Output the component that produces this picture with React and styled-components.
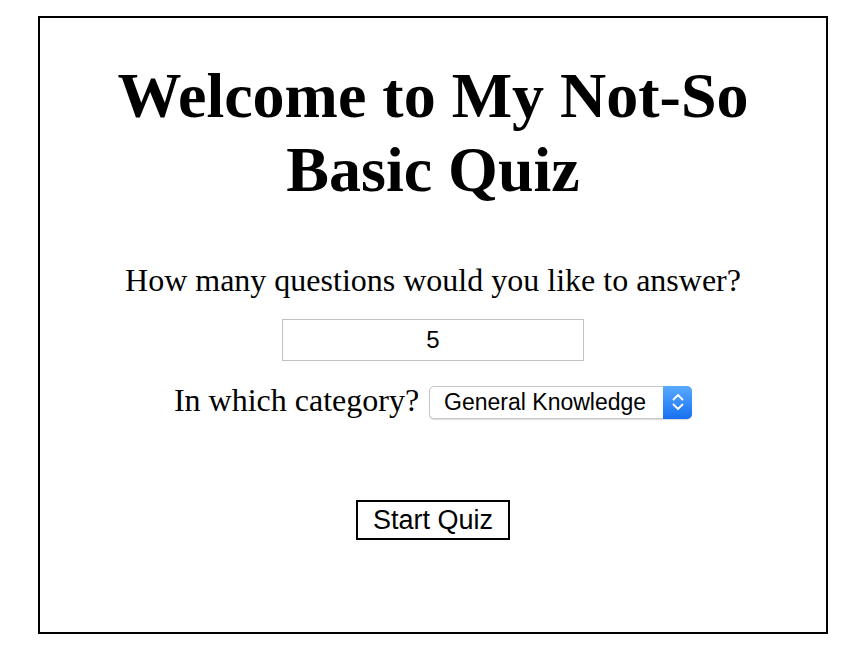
import React, { useState } from 'react';
import styled, { createGlobalStyle } from 'styled-components';

const Global = createGlobalStyle`
  html, body {
    margin: 0;
    padding: 0;
    background: #fff;
  }
  body {
    font-family: "Liberation Serif", "Times New Roman", serif;
    color: #000;
  }
`;

const categories = [
  'General Knowledge',
  'Books',
  'Film',
  'Music',
  'Television',
  'Video Games',
  'Science & Nature',
  'Computers',
  'Mathematics',
  'Sports',
  'Geography',
  'History',
];

const App = () => {
  const [count, setCount] = useState(5);
  const [category, setCategory] = useState(categories[0]);

  return (
    <>
      <Global />
      <Page>
        <Card>
          <Title>Welcome to My Not-So Basic Quiz</Title>
          <Prompt>How many questions would you like to answer?</Prompt>
          <NumberInput
            type="number"
            value={count}
            onChange={(e) => setCount(e.target.value)}
          />
          <Row>
            <Label>In which category?</Label>
            <SelectWrap>
              <Select value={category} onChange={(e) => setCategory(e.target.value)}>
                {categories.map((c) => (
                  <option key={c}>{c}</option>
                ))}
              </Select>
              <Stepper>
                <svg width="12" height="20" viewBox="0 0 12 20">
                  <path d="M1.5 7.5 L6 3 L10.5 7.5" fill="none" stroke="#fff" strokeWidth="1.8" strokeLinecap="round" strokeLinejoin="round" />
                  <path d="M1.5 12.5 L6 17 L10.5 12.5" fill="none" stroke="#fff" strokeWidth="1.8" strokeLinecap="round" strokeLinejoin="round" />
                </svg>
              </Stepper>
            </SelectWrap>
          </Row>
          <StartButton>Start Quiz</StartButton>
        </Card>
      </Page>
    </>
  );
};

export default App;

const Page = styled.div`
  padding: 16px 0 0 38px;
`;

const Card = styled.section`
  box-sizing: border-box;
  width: 790px;
  height: 618px;
  border: 2px solid #000;
  display: flex;
  flex-direction: column;
  align-items: center;
  padding-top: 41px;
`;

const Title = styled.h1`
  margin: 0;
  width: 700px;
  text-align: center;
  font-family: "Liberation Serif", "Times New Roman", serif;
  font-weight: bold;
  font-size: 64px;
  line-height: 74px;
`;

const Prompt = styled.p`
  margin: 56px 0 0;
  font-size: 32px;
  line-height: 34px;
`;

const NumberInput = styled.input`
  box-sizing: border-box;
  margin-top: 22px;
  width: 302px;
  height: 42px;
  border: 1px solid #c2c2c2;
  text-align: center;
  font-family: "Liberation Sans", Arial, sans-serif;
  font-size: 24px;
  color: #000;
  outline: none;
  -moz-appearance: textfield;
  &::-webkit-outer-spin-button,
  &::-webkit-inner-spin-button {
    -webkit-appearance: none;
    margin: 0;
  }
`;

const Row = styled.div`
  display: flex;
  align-items: center;
  gap: 10px;
  margin-top: 22px;
`;

const Label = styled.span`
  font-size: 32px;
  line-height: 34px;
  padding-bottom: 4px;
`;

const SelectWrap = styled.div`
  position: relative;
  width: 263px;
  height: 33px;
`;

const Select = styled.select`
  box-sizing: border-box;
  width: 100%;
  height: 100%;
  appearance: none;
  -webkit-appearance: none;
  border: 1px solid #c8c8c8;
  border-radius: 5px;
  background: #fff;
  padding: 0 34px 0 14px;
  font-family: "Liberation Sans", Arial, sans-serif;
  font-size: 23px;
  color: #000;
  box-shadow: 0 1px 1px rgba(0, 0, 0, 0.15);
  outline: none;
`;

const Stepper = styled.span`
  position: absolute;
  top: 0;
  right: 0;
  width: 29px;
  height: 33px;
  border-radius: 0 5px 5px 0;
  background: linear-gradient(#5aaaff, #1670f0);
  display: flex;
  align-items: center;
  justify-content: center;
  pointer-events: none;
`;

const StartButton = styled.button`
  margin-top: 79px;
  box-sizing: border-box;
  width: 154px;
  height: 40px;
  border: 2px solid #000;
  background: #fff;
  font-family: "Liberation Sans", Arial, sans-serif;
  font-size: 27px;
  color: #000;
  padding: 0;
  cursor: pointer;
`;
